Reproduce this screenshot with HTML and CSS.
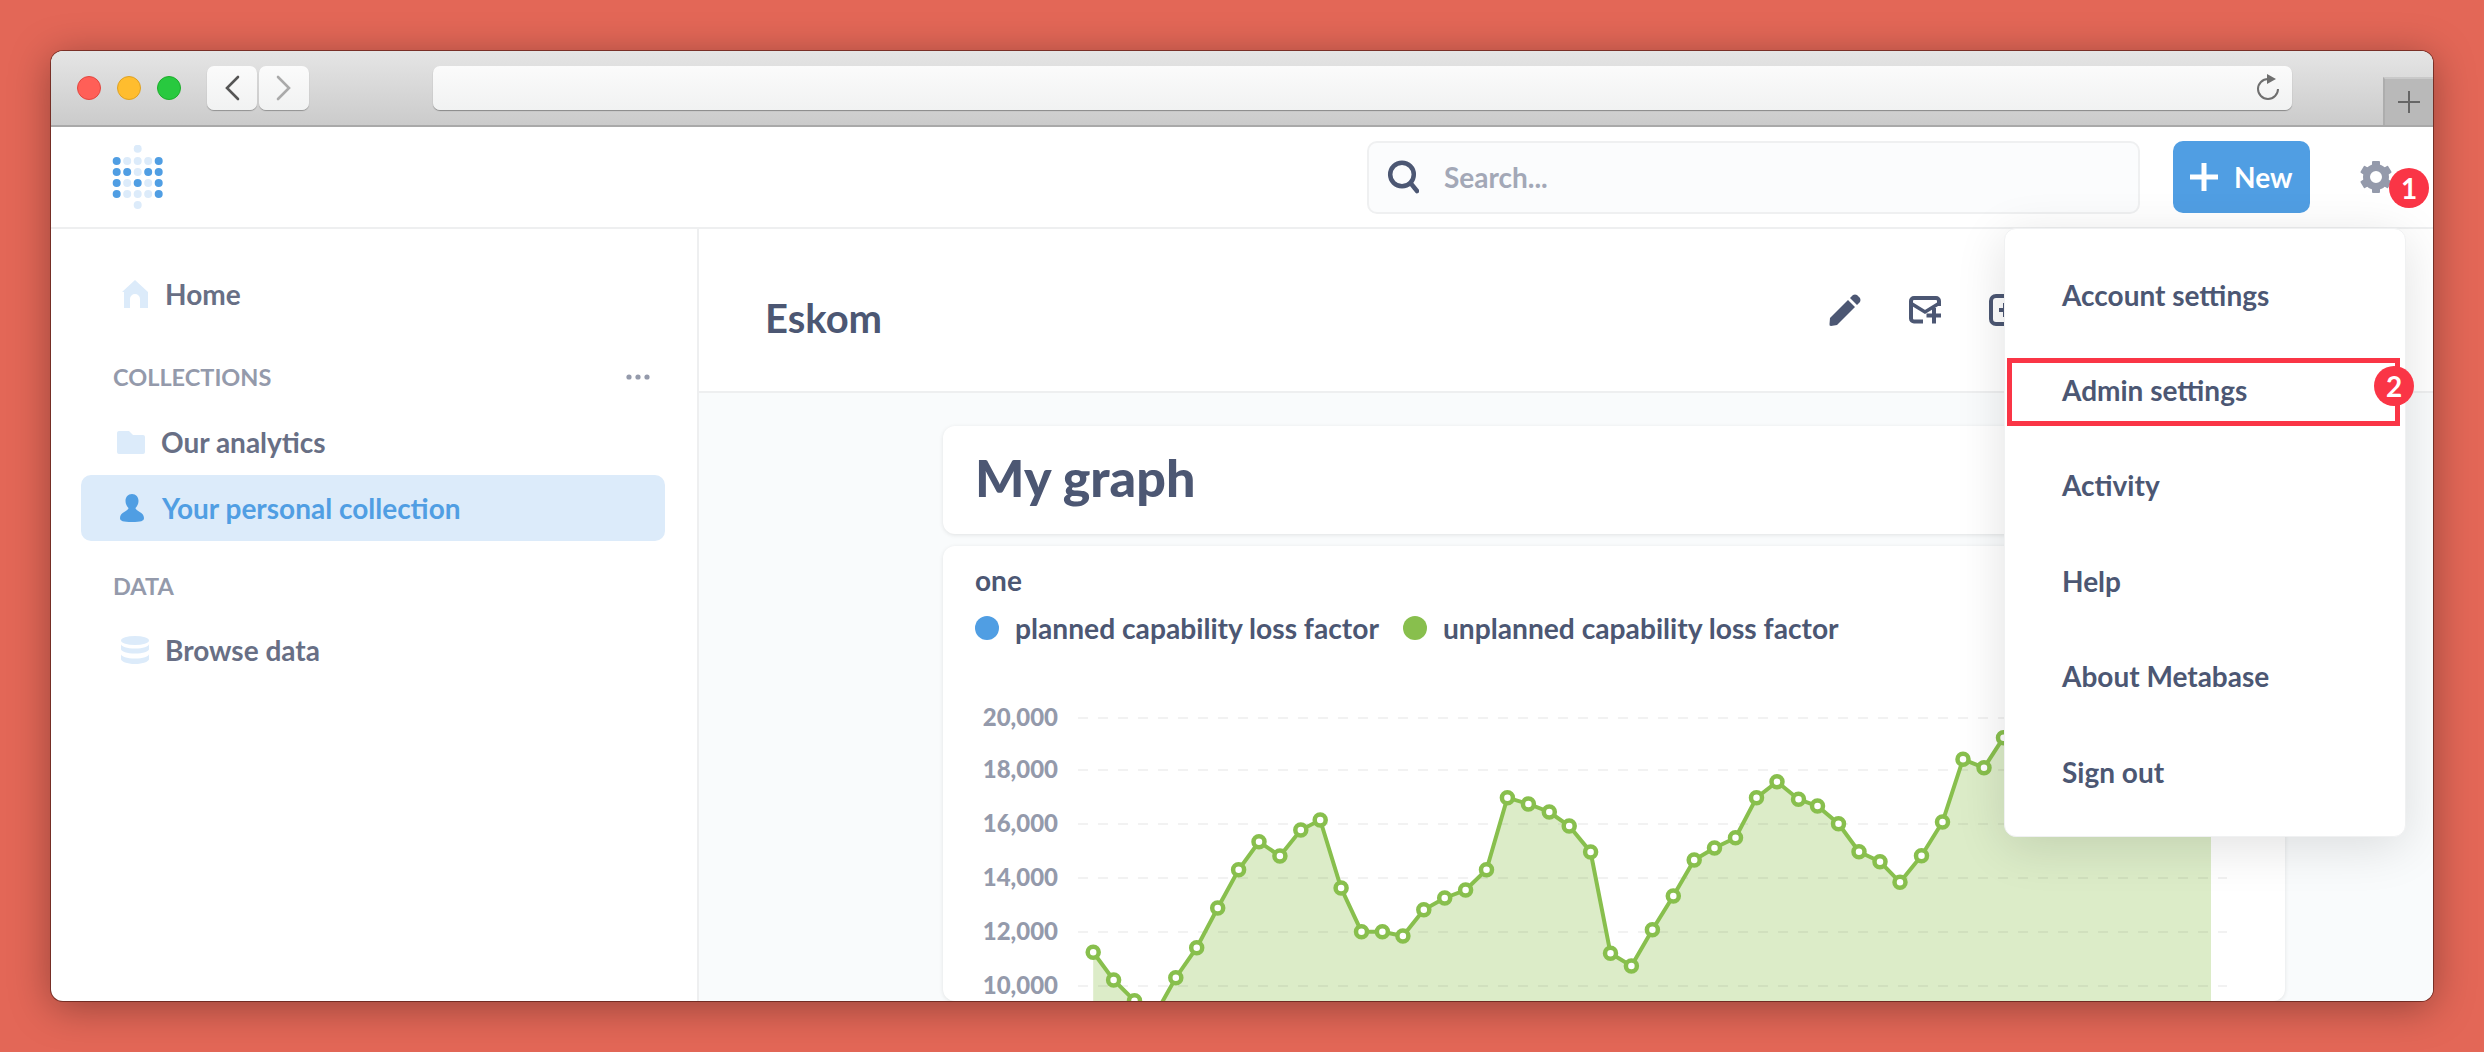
FILE: index.html
```html
<!DOCTYPE html>
<html lang="en">
<head>
  <meta charset="UTF-8" />
  <title>Metabase</title>
  <link rel="stylesheet" href="styles.css">
</head>
<body>
  <div class="window">
    <div class="toolbar">
      <div class="lights">
        <span class="light red"></span>
        <span class="light yellow"></span>
        <span class="light green"></span>
      </div>
      <div class="nav-buttons">
        <div class="nav-button">
          <svg width="16" height="26" viewBox="0 0 16 26"><path d="M14 2 3 13l11 11" fill="none" stroke="#555" stroke-width="2.6" stroke-linecap="round"/></svg>
        </div>
        <div class="nav-button">
          <svg width="16" height="26" viewBox="0 0 16 26"><path d="M2 2l11 11L2 24" fill="none" stroke="#aaa" stroke-width="2.6" stroke-linecap="round"/></svg>
        </div>
      </div>
      <div class="address-bar">
        <svg width="24" height="28" viewBox="0 0 24 28"><path d="M22 15A10 10 0 1 1 12 5" fill="none" stroke="#6f6f6f" stroke-width="2"/><path d="M11 0l9 5-9 5z" fill="#6f6f6f"/></svg>
      </div>
      <div class="new-tab">
        <svg width="22" height="22" viewBox="0 0 22 22"><path d="M11 0v22M0 11h22" stroke="#666" stroke-width="2"/></svg>
      </div>
    </div>

    <div class="topbar">
      <svg class="logo" width="52" height="64" viewBox="112 144 52 64">
        <g fill="#dcebfa">
          <circle cx="137.7" cy="147.7" r="4"/><circle cx="137.7" cy="204" r="4"/>
          <circle cx="127.2" cy="160" r="4"/><circle cx="137.7" cy="160" r="4"/><circle cx="148.2" cy="160" r="4"/>
          <circle cx="137.7" cy="171" r="4"/>
          <circle cx="127.2" cy="182" r="4"/><circle cx="148.2" cy="182" r="4"/>
          <circle cx="127.2" cy="193" r="4"/><circle cx="137.7" cy="193" r="4"/><circle cx="148.2" cy="193" r="4"/>
        </g>
        <g fill="#509ee3">
          <circle cx="116.7" cy="160" r="4"/><circle cx="158.7" cy="160" r="4"/>
          <circle cx="116.7" cy="171" r="4"/><circle cx="127.2" cy="171" r="4"/><circle cx="148.2" cy="171" r="4"/><circle cx="158.7" cy="171" r="4"/>
          <circle cx="116.7" cy="182" r="4"/><circle cx="137.7" cy="182" r="4"/><circle cx="158.7" cy="182" r="4"/>
          <circle cx="116.7" cy="193" r="4"/><circle cx="158.7" cy="193" r="4"/>
        </g>
      </svg>
      <div class="search">
        <svg width="32" height="34" viewBox="0 0 32 34"><circle cx="15" cy="14.500" r="11.800" fill="none" stroke="#4c5773" stroke-width="4.500"/><path d="M23.500 23l6.500 8" stroke="#4c5773" stroke-width="4.500" stroke-linecap="round"/></svg>
        <span>Search...</span>
      </div>
      <div class="new-button">
        <svg width="28" height="28" viewBox="0 0 28 28"><path d="M14 0v28M0 14h28" stroke="#fff" stroke-width="5"/></svg>
        <span>New</span>
      </div>
      <div class="gear">
        <svg width="34" height="34" viewBox="0 0 34 34">
          <g fill="#949aab">
            <rect x="13" y="1" width="8" height="8" rx="1"/>
            <rect x="13" y="25" width="8" height="8" rx="1"/>
            <rect x="13" y="1" width="8" height="8" rx="1" transform="rotate(60 17 17)"/>
            <rect x="13" y="25" width="8" height="8" rx="1" transform="rotate(60 17 17)"/>
            <rect x="13" y="1" width="8" height="8" rx="1" transform="rotate(120 17 17)"/>
            <rect x="13" y="25" width="8" height="8" rx="1" transform="rotate(120 17 17)"/>
          </g>
          <circle cx="17" cy="17" r="9.5" fill="none" stroke="#949aab" stroke-width="7"/>
        </svg>
        <span class="badge badge-gear">1</span>
      </div>
    </div>

    <div class="content">
      <div class="sidebar">
        <div class="side-row home">
          <svg width="26" height="28" viewBox="0 0 26 28"><path d="M13 0 26 12v16h-8v-9a5 5 0 0 0-10 0v9H2V12H0z" fill="#dcebfa"/></svg>
          <span>Home</span>
        </div>
        <div class="side-heading collections-heading">
          <span>COLLECTIONS</span>
          <svg width="24" height="6" viewBox="0 0 24 6"><g fill="#949aab"><circle cx="3" cy="3" r="2.6"/><circle cx="12" cy="3" r="2.6"/><circle cx="21" cy="3" r="2.6"/></g></svg>
        </div>
        <div class="side-row folder-row">
          <svg width="28" height="23" viewBox="0 0 28 23"><path d="M2 0h10l4 4h10a2 2 0 0 1 2 2v15a2 2 0 0 1-2 2H2a2 2 0 0 1-2-2V2a2 2 0 0 1 2-2z" fill="#dcebfa"/></svg>
          <span>Our analytics</span>
        </div>
        <div class="side-row active">
          <svg width="24" height="28" viewBox="0 0 24 28"><path d="M12 0c4 0 6.500 3 6.500 7 0 3-1.500 5.500-3 7 0 3 8.500 4 8.500 10 0 3-3 4-12 4S0 27 0 24c0-6 8.500-7 8.500-10-1.500-1.500-3-4-3-7 0-4 2.500-7 6.500-7z" fill="#509ee3"/></svg>
          <span>Your personal collection</span>
        </div>
        <div class="side-heading data-heading"><span>DATA</span></div>
        <div class="side-row browse">
          <svg width="28" height="28" viewBox="0 0 28 28"><g fill="#dcebfa"><ellipse cx="14" cy="4.500" rx="14" ry="4.500"/><path d="M0 8c0 2.500 6 4.500 14 4.500S28 10.500 28 8v5c0 2.500-6 4.500-14 4.500S0 15.500 0 13z"/><path d="M0 18c0 2.500 6 4.500 14 4.500S28 20.500 28 18v5c0 2.500-6 5-14 5S0 25.500 0 23z"/></g></svg>
          <span>Browse data</span>
        </div>
      </div>

      <div class="main">
        <div class="page-header">
          <div class="page-title">Eskom</div>
          <div class="page-actions">
            <svg width="32" height="32" viewBox="0 0 32 32"><path d="M1 24 19 6l7 7L8 31l-6 1q-2 0-1.500-2z" fill="#4c5773"/><path d="M21 4l3-3q2-1 4 0l3 3q1 2 0 4l-3 3z" fill="#4c5773"/></svg>
            <svg width="32" height="28" viewBox="0 0 32 28"><path d="M14 25.500H5a3 3 0 0 1-3-3V5a3 3 0 0 1 3-3h22a3 3 0 0 1 3 3v5" fill="none" stroke="#4c5773" stroke-width="4"/><path d="M3 8l13 8 13-8" fill="none" stroke="#4c5773" stroke-width="3.600"/><path d="M25 12v15.500M17.500 19.500h14.500" stroke="#4c5773" stroke-width="4"/></svg>
            <svg width="32" height="32" viewBox="0 0 32 32"><rect x="2" y="2" width="28" height="28" rx="5" fill="none" stroke="#4c5773" stroke-width="4"/><path d="M16 9v14M10 16h12" stroke="#4c5773" stroke-width="4"/></svg>
          </div>
        </div>
        <div class="dashboard">
          <div class="card heading-card">My graph</div>
          <div class="card chart-card">
            <div class="chart-title">one</div>
            <div class="legend">
              <span class="legend-dot blue"></span>
              <span class="legend-label">planned capability loss factor</span>
              <span class="legend-dot lime"></span>
              <span class="legend-label">unplanned capability loss factor</span>
            </div>
            <svg class="chart" width="1342" height="341" viewBox="943 660 1342 341">
              <path d="M1093.200 1001V952.300L1113.600 980 1134.500 1000.700 1155 1015 1175.800 977.700 1196.700 947.700 1217.700 908 1238.600 869.700 1259 841.700 1279.900 856 1300.800 830 1320.200 820 1341.100 888 1361.500 931.700 1382.400 931.700 1402.900 936 1423.800 909.700 1444.700 898 1465.600 890 1486.500 869.700 1507.400 797.700 1528.400 804 1549.300 812 1569.200 826 1590.600 852 1610.500 953.300 1631.400 966 1652.400 929.700 1673.300 896 1694.200 860 1714.500 848 1735.500 837.700 1756.500 797.700 1777 781.700 1798.500 799.300 1817.500 806 1838.500 823.700 1859 851.700 1880 861.700 1900 882.300 1921.500 855.700 1942.500 822 1963 759.300 1984 767.700 2003.500 737.700 2211 700V1001z" fill="#dcecc8"/>
              <g class="grid">
                <path d="M1078 718H2227"/>
                <path d="M1078 770H2227"/>
                <path d="M1078 824H2227"/>
                <path d="M1078 878H2227"/>
                <path d="M1078 932H2227"/>
                <path d="M1078 986H2227"/>
              </g>
              <g class="axis">
                <text x="1058" y="726">20,000</text>
                <text x="1058" y="778">18,000</text>
                <text x="1058" y="832">16,000</text>
                <text x="1058" y="886">14,000</text>
                <text x="1058" y="940">12,000</text>
                <text x="1058" y="994">10,000</text>
              </g>
              <polyline class="series" points="1093.200,952.300 1113.600,980 1134.500,1000.700 1155,1015 1175.800,977.700 1196.700,947.700 1217.700,908 1238.600,869.700 1259,841.700 1279.900,856 1300.800,830 1320.200,820 1341.100,888 1361.500,931.700 1382.400,931.700 1402.900,936 1423.800,909.700 1444.700,898 1465.600,890 1486.500,869.700 1507.400,797.700 1528.400,804 1549.300,812 1569.200,826 1590.600,852 1610.500,953.300 1631.400,966 1652.400,929.700 1673.300,896 1694.200,860 1714.500,848 1735.500,837.700 1756.500,797.700 1777,781.700 1798.500,799.300 1817.500,806 1838.500,823.700 1859,851.700 1880,861.700 1900,882.300 1921.500,855.700 1942.500,822 1963,759.300 1984,767.700 2003.500,737.700"/>
              <g class="points">
                <circle cx="1093.200" cy="952.300" r="5.500"/><circle cx="1113.600" cy="980" r="5.500"/><circle cx="1134.500" cy="1000.700" r="5.500"/><circle cx="1175.800" cy="977.700" r="5.500"/><circle cx="1196.700" cy="947.700" r="5.500"/><circle cx="1217.700" cy="908" r="5.500"/><circle cx="1238.600" cy="869.700" r="5.500"/><circle cx="1259" cy="841.700" r="5.500"/><circle cx="1279.900" cy="856" r="5.500"/><circle cx="1300.800" cy="830" r="5.500"/><circle cx="1320.200" cy="820" r="5.500"/><circle cx="1341.100" cy="888" r="5.500"/><circle cx="1361.500" cy="931.700" r="5.500"/><circle cx="1382.400" cy="931.700" r="5.500"/><circle cx="1402.900" cy="936" r="5.500"/><circle cx="1423.800" cy="909.700" r="5.500"/><circle cx="1444.700" cy="898" r="5.500"/><circle cx="1465.600" cy="890" r="5.500"/><circle cx="1486.500" cy="869.700" r="5.500"/><circle cx="1507.400" cy="797.700" r="5.500"/><circle cx="1528.400" cy="804" r="5.500"/><circle cx="1549.300" cy="812" r="5.500"/><circle cx="1569.200" cy="826" r="5.500"/><circle cx="1590.600" cy="852" r="5.500"/><circle cx="1610.500" cy="953.300" r="5.500"/><circle cx="1631.400" cy="966" r="5.500"/><circle cx="1652.400" cy="929.700" r="5.500"/><circle cx="1673.300" cy="896" r="5.500"/><circle cx="1694.200" cy="860" r="5.500"/><circle cx="1714.500" cy="848" r="5.500"/><circle cx="1735.500" cy="837.700" r="5.500"/><circle cx="1756.500" cy="797.700" r="5.500"/><circle cx="1777" cy="781.700" r="5.500"/><circle cx="1798.500" cy="799.300" r="5.500"/><circle cx="1817.500" cy="806" r="5.500"/><circle cx="1838.500" cy="823.700" r="5.500"/><circle cx="1859" cy="851.700" r="5.500"/><circle cx="1880" cy="861.700" r="5.500"/><circle cx="1900" cy="882.300" r="5.500"/><circle cx="1921.500" cy="855.700" r="5.500"/><circle cx="1942.500" cy="822" r="5.500"/><circle cx="1963" cy="759.300" r="5.500"/><circle cx="1984" cy="767.700" r="5.500"/><circle cx="2003.500" cy="737.700" r="5.500"/>
              </g>
            </svg>
          </div>
        </div>
      </div>
    </div>

    <div class="settings-menu">
      <div class="menu-item">Account settings</div>
      <div class="menu-item admin">
        Admin settings
        <span class="red-box"></span>
        <span class="badge badge-admin">2</span>
      </div>
      <div class="menu-item">Activity</div>
      <div class="menu-item">Help</div>
      <div class="menu-item">About Metabase</div>
      <div class="menu-item">Sign out</div>
    </div>
  </div>
</body>
</html>
```
FILE: styles.css
```css
:root {
  --brand: #509ee3;
  --text-dark: #4c5773;
  --text-mid: #686f85;
  --text-light: #949aab;
  --border: #eeeff0;
}

* {
  box-sizing: border-box;
  margin: 0;
  padding: 0;
  font-family: 'Lato', 'Liberation Sans', sans-serif;
}

html, body {
  height: 100%;
  background-color: #e36757;
  overflow: hidden;
}

body {
  padding: 51px;
}

.window {
  position: relative;
  display: flex;
  flex-direction: column;
  height: 950px;
  background-color: #fff;
  border-radius: 12px;
  overflow: hidden;
  box-shadow: 0 0 0 1px rgba(70, 20, 15, 0.6), 0 6px 40px rgba(0, 0, 0, 0.35);
}

/* browser chrome */
.toolbar {
  display: flex;
  align-items: center;
  flex: none;
  height: 76px;
  padding-left: 26px;
  background: linear-gradient(#e5e5e5, #cbcbcb);
  border-bottom: 2px solid #a9a9a9;
}

.lights {
  display: flex;
  gap: 16px;
}

.light {
  width: 24px;
  height: 24px;
  border-radius: 50%;
}

.light.red {
  background-color: #ff5f57;
  border: 1px solid #e2463f;
}

.light.yellow {
  background-color: #ffbd2e;
  border: 1px solid #dea123;
}

.light.green {
  background-color: #28c93f;
  border: 1px solid #1dad2b;
}

.nav-buttons {
  display: flex;
  gap: 2px;
  margin-left: 26px;
}

.nav-button {
  display: flex;
  align-items: center;
  justify-content: center;
  width: 50px;
  height: 44px;
  background: linear-gradient(#fbfbfb, #f1f2f2);
  border-radius: 7px;
  box-shadow: 0 1px 1px rgba(0, 0, 0, 0.3);
}

.address-bar {
  display: flex;
  align-items: center;
  justify-content: flex-end;
  flex: 1;
  height: 44px;
  margin-left: 124px;
  margin-right: 91px;
  padding-right: 12px;
  background: linear-gradient(#fbfbfb, #f1f2f2);
  border-radius: 7px;
  box-shadow: 0 1px 1px rgba(0, 0, 0, 0.35);
}

.new-tab {
  display: flex;
  align-items: center;
  justify-content: center;
  align-self: flex-end;
  width: 50px;
  height: 48px;
  background-color: #b9b9b9;
  border-top: 2px solid #c9c9c9;
  border-left: 2px solid #adadad;
}

/* app header */
.topbar {
  display: flex;
  align-items: center;
  flex: none;
  height: 102px;
  padding-left: 61px;
  padding-right: 40px;
  border-bottom: 2px solid var(--border);
}

.search {
  display: flex;
  align-items: center;
  gap: 25px;
  width: 773px;
  height: 73px;
  margin-left: auto;
  padding-left: 18px;
  background-color: #fbfcfd;
  border: 2px solid #eff0f1;
  border-radius: 10px;
  color: #a3a8b7;
  font-size: 28px;
  font-weight: 700;
}

.new-button {
  display: flex;
  align-items: center;
  gap: 16px;
  width: 137px;
  height: 72px;
  margin-left: 33px;
  padding-left: 17px;
  background-color: var(--brand);
  border-radius: 10px;
  color: #fff;
  font-size: 28px;
  font-weight: 700;
}

.gear {
  position: relative;
  display: flex;
  margin-left: 49px;
}

/* numbered callouts */
.badge {
  position: absolute;
  display: flex;
  align-items: center;
  justify-content: center;
  width: 40px;
  height: 40px;
  background-color: #fa3546;
  border-radius: 50%;
  color: #fff;
  font-size: 28px;
  font-weight: 700;
}

.badge-gear {
  left: 30px;
  top: 8px;
}

.badge-admin {
  right: -9px;
  top: 24px;
}

.content {
  display: flex;
  flex: 1;
  min-height: 0;
}

/* sidebar */
.sidebar {
  flex: none;
  width: 648px;
  padding: 43px 32px 0 30px;
  border-right: 2px solid var(--border);
}

.side-row {
  display: flex;
  align-items: center;
  padding-left: 36px;
  color: var(--text-mid);
  font-size: 28px;
  font-weight: 700;
}

.side-row.home {
  height: 44px;
  padding-left: 41px;
  gap: 17px;
}

.side-row.folder-row {
  height: 66px;
  margin-top: 17px;
  gap: 16px;
}

.side-row.active {
  height: 66px;
  padding-left: 39px;
  gap: 18px;
  background-color: #dcebfa;
  border-radius: 10px;
  color: var(--brand);
}

.side-row.browse {
  height: 44px;
  margin-top: 27px;
  padding-left: 40px;
  gap: 16px;
}

.side-heading {
  display: flex;
  align-items: center;
  justify-content: space-between;
  height: 30px;
  padding-left: 32px;
  padding-right: 15px;
  color: var(--text-light);
  font-size: 23.500px;
  font-weight: 700;
}

.collections-heading {
  margin-top: 46px;
}

.data-heading {
  margin-top: 30px;
}

/* main area */
.main {
  display: flex;
  flex-direction: column;
  flex: 1;
  min-width: 0;
  background-color: #f9fbfc;
}

.page-header {
  display: flex;
  align-items: center;
  justify-content: space-between;
  flex: none;
  height: 164px;
  padding-left: 66px;
  padding-right: 412px;
  background-color: #fff;
  border-bottom: 2px solid var(--border);
}

.page-title {
  padding-top: 16px;
  color: var(--text-dark);
  font-size: 40px;
  font-weight: 700;
}

.page-actions {
  display: flex;
  align-items: center;
  gap: 48px;
}

.dashboard {
  display: flex;
  flex-direction: column;
  gap: 12px;
  flex: 1;
  min-height: 0;
  padding: 33px 148px 0 244px;
}

.card {
  background-color: #fff;
  border-radius: 12px;
  box-shadow: 0 1px 4px rgba(0, 0, 0, 0.1);
  color: var(--text-dark);
}

.heading-card {
  display: flex;
  align-items: center;
  flex: none;
  height: 108px;
  padding-left: 32px;
  padding-bottom: 6px;
  font-size: 52px;
  font-weight: 900;
}

.chart-card {
  flex: 1;
  padding-top: 20px;
  overflow: hidden;
}

.chart-title {
  height: 30px;
  padding-left: 32px;
  font-size: 28px;
  font-weight: 700;
  line-height: 28px;
}

.legend {
  display: flex;
  align-items: center;
  height: 30px;
  margin-top: 17px;
  padding-left: 32px;
  font-size: 28.200px;
  font-weight: 700;
}

.legend-dot {
  width: 24px;
  height: 24px;
  border-radius: 50%;
}

.legend-dot.blue {
  background-color: var(--brand);
}

.legend-dot.lime {
  margin-left: 24px;
  background-color: #88bf4d;
}

.legend-label {
  margin-left: 16px;
}

.chart {
  display: block;
  margin-top: 17px;
}

.grid path {
  stroke: rgba(70, 70, 70, 0.07);
  stroke-width: 2;
  stroke-dasharray: 10 10;
}

.axis text {
  fill: var(--text-light);
  font-size: 24px;
  font-weight: 900;
  text-anchor: end;
}

.series {
  fill: none;
  stroke: #88bf4d;
  stroke-width: 4;
}

.points circle {
  fill: #fff;
  stroke: #88bf4d;
  stroke-width: 4.500;
}

/* dropdown */
.settings-menu {
  position: absolute;
  left: 1953px;
  top: 177px;
  width: 402px;
  height: 609px;
  padding-top: 18px;
  background-color: #fff;
  border: 1px solid #f0f1f2;
  border-radius: 12px;
  box-shadow: 0 10px 50px rgba(0, 0, 0, 0.12);
}

.menu-item {
  position: relative;
  display: flex;
  align-items: center;
  height: 95.400px;
  padding-left: 57px;
  color: var(--text-dark);
  font-size: 28px;
  font-weight: 700;
}

.red-box {
  position: absolute;
  left: 2px;
  right: 5px;
  top: 16px;
  bottom: 12px;
  border: 5px solid #fa3546;
}
```
